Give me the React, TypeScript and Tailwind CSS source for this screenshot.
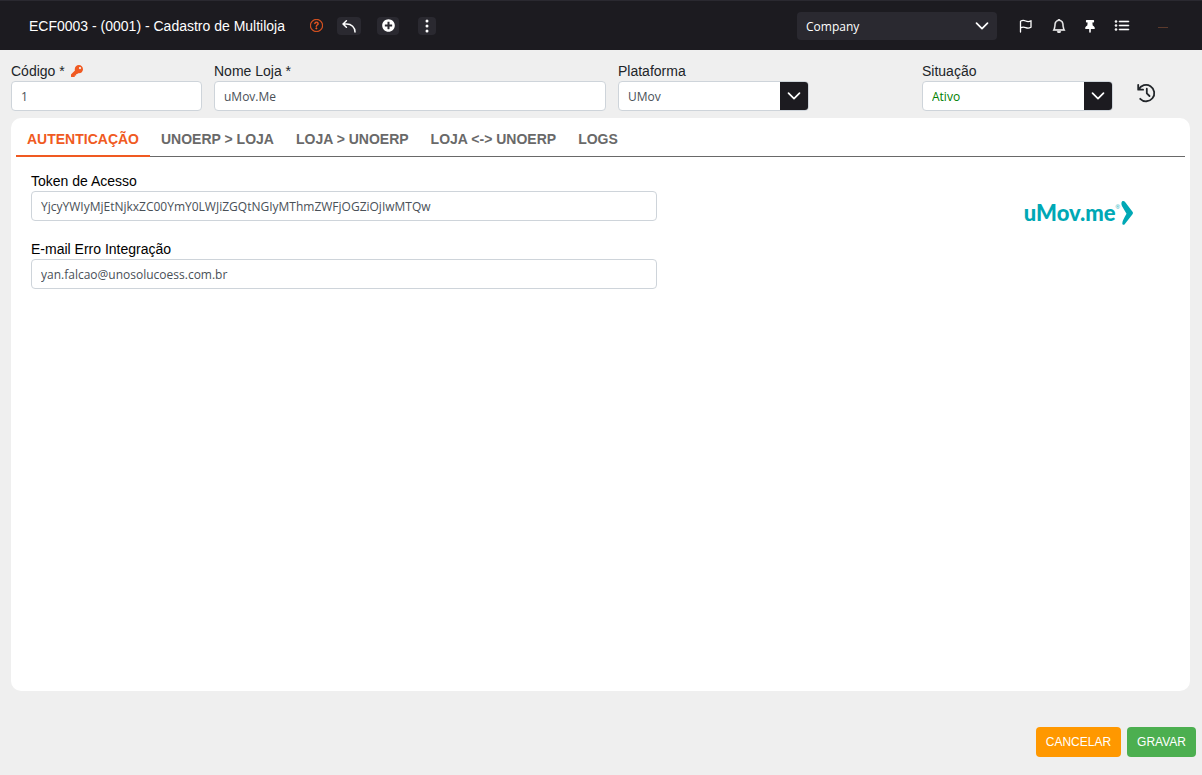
import { useState } from 'react'
import type { ReactNode } from 'react'
import { BsBell, BsListUl, BsQuestionCircle, BsThreeDotsVertical } from 'react-icons/bs'
import { FaKey, FaPlusCircle, FaThumbtack } from 'react-icons/fa'

const tabs = ['AUTENTICAÇÃO', 'UNOERP > LOJA', 'LOJA > UNOERP', 'LOJA <-> UNOERP', 'LOGS']

const inputClass =
  "h-[30px] w-full rounded border border-[#ced4da] bg-white px-[9px] font-['Open_Sans',sans-serif] text-xs text-[#495057] outline-none"

function ChevronDown() {
  return (
    <svg viewBox="0 0 14 14" className="size-3.5" fill="none" stroke="currentColor" strokeWidth="1.7" strokeLinecap="round" strokeLinejoin="round">
      <path d="M1.5 4.2 7 9.7l5.5-5.5" />
    </svg>
  )
}

function BackIcon() {
  return (
    <svg viewBox="0 0 14 14" className="size-3.5" fill="none" stroke="currentColor" strokeWidth="1.5" strokeLinecap="round" strokeLinejoin="round">
      <path d="M4.4 1.8 1 5l3.4 3.3M1 5h3.5c5 0 8.500 3.200 8.500 8" />
    </svg>
  )
}

function FlagIcon() {
  return (
    <svg viewBox="0 0 14 14" className="size-3.5" fill="none" stroke="currentColor" strokeWidth="1.3" strokeLinecap="round" strokeLinejoin="round">
      <path d="M1.500 13V2.300C3.500 1 5.100 1.300 6.700 2c1.800.8 3.400.8 5.300-.3v6.600c-1.900 1.100-3.500 1.100-5.300.3-1.600-.7-3.200-1-5.200.3" />
    </svg>
  )
}

function HistoryIcon() {
  return (
    <svg viewBox="0 0 20 20" className="size-5" fill="none" stroke="currentColor" strokeWidth="1.8" strokeLinecap="round" strokeLinejoin="round">
      <path d="M1.200 1.800v4.900h4.900M1.700 6.500a8.200 8.200 0 1 1 1.500 9.300M9.800 5.700v4.600l2.700 2.700" />
    </svg>
  )
}

function Logo() {
  return (
    <div className="flex items-center text-[#00a8b5]" aria-label="uMov.me">
      <span className="font-['Lato',sans-serif] text-[22px] leading-8 font-black">uMov.me</span>
      <span className="self-start pt-1 text-[6px] leading-3">®</span>
      <svg viewBox="0 0 14 26" className="h-[26px] w-3.5" fill="currentColor">
        <path d="M2 1.500c1-.9 2.300-.5 3.100.6l7.400 9.700c.7.900.6 1.600 0 2.400l-7.800 10c-.9 1.100-2.400.5-2.400-1 .2-2.500 1.700-5 4.200-9.500L2.100 6.200C1.300 4.600 1.100 2.600 2 1.500Z" />
      </svg>
    </div>
  )
}

function Field({ id, label, icon, children }: { id: string; label: string; icon?: ReactNode; children: ReactNode }) {
  return (
    <div>
      <label htmlFor={id} className="flex h-5 items-center gap-1.5 text-sm">
        {label}
        {icon}
      </label>
      {children}
    </div>
  )
}

function Select({ id, value, color }: { id: string; value: string; color: string }) {
  return (
    <div className="relative">
      <select id={id} className={`${inputClass} appearance-none pt-0.5 ${color}`}>
        <option>{value}</option>
      </select>
      <span className="pointer-events-none absolute inset-y-px right-px flex w-7 items-center justify-center rounded-r-[3px] bg-[#1c1b20] text-white">
        <ChevronDown />
      </span>
    </div>
  )
}

function Header() {
  return (
    <header className="flex h-[50px] items-center border-t border-[#2a2930] bg-[#1c1b20] pr-[34px] pl-[29px] text-white">
      <h1 className="text-sm">ECF0003 - (0001) - Cadastro de Multiloja</h1>
      <button aria-label="Ajuda" className="ml-[25px] text-[#f05a22]">
        <BsQuestionCircle className="size-[13px] stroke-[0.4]" />
      </button>
      <button aria-label="Voltar" className="ml-3.5 flex h-[18px] w-6 items-center justify-center rounded bg-[#2a2930]">
        <BackIcon />
      </button>
      <button aria-label="Novo" className="ml-4 flex h-[18px] w-[22px] items-center justify-center rounded bg-[#2a2930]">
        <FaPlusCircle className="size-[13px]" />
      </button>
      <button aria-label="Mais opções" className="ml-[19px] flex h-[18px] w-[18px] items-center justify-center rounded bg-[#2a2930]">
        <BsThreeDotsVertical className="size-4" />
      </button>

      <div className="relative ml-auto w-[200px]">
        <select aria-label="Empresa" className="h-7 w-full appearance-none rounded bg-[#2a2930] px-[9px] pt-0.5 font-['Open_Sans',sans-serif] text-xs outline-none">
          <option>Company</option>
        </select>
        <span className="pointer-events-none absolute inset-y-0 right-2 flex items-center">
          <ChevronDown />
        </span>
      </div>

      <div className="ml-[22px] flex items-center">
        <button aria-label="Favoritos"><FlagIcon /></button>
        <button aria-label="Notificações" className="ml-[19px]"><BsBell className="size-3.5 stroke-[0.6]" /></button>
        <button aria-label="Fixar" className="ml-[17px] pt-0.5"><FaThumbtack className="h-[13px] w-3.5" /></button>
        <button aria-label="Menu" className="ml-[17px]"><BsListUl className="size-4 stroke-[0.6]" /></button>
        <button aria-label="Usuário" className="mt-1 ml-7 h-px w-2.5 bg-[#5b3a2c]" />
      </div>
    </header>
  )
}

export default function App() {
  const [active, setActive] = useState(0)

  return (
    <div className="flex min-h-screen flex-col bg-[#efefef] font-['Liberation_Sans',Arial,sans-serif] text-[#212529]">
      <Header />

      <form className="flex flex-1 flex-col" onSubmit={(e) => e.preventDefault()}>
        {/* Dados principais */}
        <div className="grid grid-cols-[191fr_392fr_191fr_89fr_191fr_66fr] gap-x-3 px-[11px] pt-[11px]">
          <Field id="codigo" label="Código *" icon={<FaKey className="size-3 text-[#f05a22]" />}>
            <input id="codigo" defaultValue="1" className={inputClass} />
          </Field>
          <Field id="nome" label="Nome Loja *">
            <input id="nome" defaultValue="uMov.Me" className={inputClass} />
          </Field>
          <Field id="plataforma" label="Plataforma">
            <Select id="plataforma" value="UMov" color="" />
          </Field>
          <div className="col-start-5">
            <Field id="situacao" label="Situação">
              <Select id="situacao" value="Ativo" color="text-[green]!" />
            </Field>
          </div>
          <button type="button" aria-label="Histórico" className="mt-[22px] ml-3 size-5">
            <HistoryIcon />
          </button>
        </div>

        {/* Abas */}
        <section className="mt-[7px] mr-3 ml-[11px] flex-1 rounded-[10px] bg-white px-[5px] pt-1 text-black">
          <div role="tablist" className="flex border-b border-[#696969]">
            {tabs.map((tab, idx) => (
              <button
                key={tab}
                type="button"
                role="tab"
                aria-selected={idx === active}
                onClick={() => setActive(idx)}
                className={`-mb-px h-[35px] border-b-2 px-[11px] text-sm font-bold ${
                  idx === active ? 'border-[#f05a22] text-[#f05a22]' : 'border-transparent text-[#696969]'
                }`}
              >
                {tab}
              </button>
            ))}
          </div>

          <div className="grid grid-cols-[626fr_477fr] pt-3.5 pr-[51px] pl-[15px]">
            <div className="flex flex-col gap-[18px]">
              <Field id="token" label="Token de Acesso">
                <input id="token" defaultValue="YjcyYWIyMjEtNjkxZC00YmY0LWJiZGQtNGIyMThmZWFjOGZiOjIwMTQw" className={inputClass} />
              </Field>
              <Field id="email" label="E-mail Erro Integração">
                <input id="email" type="email" defaultValue="yan.falcao@unosolucoess.com.br" className={inputClass} />
              </Field>
            </div>
            <div className="flex items-start justify-end pt-[26px]">
              <Logo />
            </div>
          </div>
        </section>

        {/* Ações */}
        <footer className="flex justify-end gap-1.5 pt-9 pr-1.5 pb-[18px] text-xs text-white">
          <button type="button" className="h-[30px] rounded bg-[#ff9800] px-2.5">CANCELAR</button>
          <button type="submit" className="h-[30px] rounded bg-[#4caf50] px-2.5">GRAVAR</button>
        </footer>
      </form>
    </div>
  )
}
